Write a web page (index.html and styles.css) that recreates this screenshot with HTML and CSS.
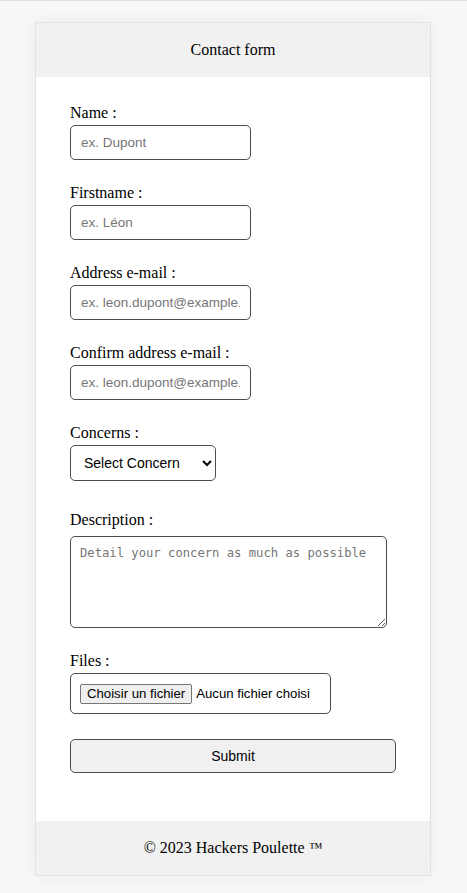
FILE: index.html
```html
<!DOCTYPE html>
<html lang="en">
<head>
<meta charset="utf-8">
<title>Contact form</title>
<link rel="stylesheet" href="styles.css">
</head>
<body>
<div class="card">
  <header class="card-head">Contact form</header>
  <form class="form">
    <div class="field">
      <label for="name">Name :</label>
      <input class="text" id="name" type="text" placeholder="ex. Dupont">
    </div>
    <div class="field">
      <label for="first">Firstname :</label>
      <input class="text" id="first" type="text" placeholder="ex. Léon">
    </div>
    <div class="field">
      <label for="mail">Address e-mail :</label>
      <input class="text" id="mail" type="email" placeholder="ex. leon.dupont@example.com">
    </div>
    <div class="field">
      <label for="mail2">Confirm address e-mail :</label>
      <input class="text" id="mail2" type="email" placeholder="ex. leon.dupont@example.com">
    </div>
    <div class="field">
      <label for="concern">Concerns :</label>
      <select class="select" id="concern">
        <option>Select Concern</option>
      </select>
    </div>
    <div class="field field-desc">
      <label for="desc">Description :</label>
      <textarea class="area" id="desc" placeholder="Detail your concern as much as possible"></textarea>
    </div>
    <div class="field field-files">
      <label for="files">Files :</label>
      <div class="filebox">
        <span class="filebtn">Choisir un fichier</span>
        <span class="filetxt">Aucun fichier choisi</span>
      </div>
    </div>
    <button class="submit" type="button">Submit</button>
  </form>
  <footer class="card-foot">© 2023 Hackers Poulette <span class="tm">™</span></footer>
</div>
</body>
</html>
```
FILE: styles.css
```css
html, body {
  margin: 0;
  padding: 0;
}
body {
  background: #f8f8f8;
  border-top: 1px solid #dcdcdc;
  font-family: "Liberation Serif", "Times New Roman", serif;
  font-size: 16px;
  color: #000;
  padding-top: 21px;
  height: 893px;
  box-sizing: border-box;
}
.card {
  width: 396px;
  margin: 0 0 0 35px;
  background: #fff;
  border: 1px solid #e3e3e3;
  box-sizing: border-box;
  box-shadow: 0 0 18px rgba(0, 0, 0, 0.06);
}
.card-head, .card-foot {
  background: #f1f1f1;
  height: 54px;
  display: flex;
  align-items: center;
  justify-content: center;
}
.tm {
  font-size: 14px;
  margin-left: 4px;
}
.form {
  padding: 27px 34px 48px;
  display: flex;
  flex-direction: column;
}
.field {
  display: flex;
  flex-direction: column;
  align-items: flex-start;
  margin-bottom: 24px;
}
.field label {
  line-height: 18px;
  margin-bottom: 3px;
}
.text {
  width: 181px;
  height: 35px;
  box-sizing: border-box;
  border: 1px solid #4d4d4d;
  border-radius: 5px;
  padding: 0 10px;
  font-family: "Liberation Sans", Arial, sans-serif;
  font-size: 13.5px;
  color: #000;
  background: #fff;
}
.text::placeholder {
  color: #767676;
}
.select {
  width: 146px;
  height: 36px;
  box-sizing: border-box;
  border: 1px solid #4d4d4d;
  border-radius: 5px;
  padding: 0 8px 0 9px;
  font-family: "Liberation Sans", Arial, sans-serif;
  font-size: 14px;
  color: #000;
  background: #fff;
}
.field-desc {
  margin-top: 6px;
  margin-bottom: 24px;
}
.field-desc label {
  margin-bottom: 7px;
}
.area {
  width: 317px;
  height: 92px;
  box-sizing: border-box;
  border: 1px solid #4d4d4d;
  border-radius: 5px;
  padding: 9px 9px;
  font-family: "DejaVu Sans Mono", "Liberation Mono", monospace;
  font-size: 12.2px;
  color: #000;
  resize: both;
  margin: 0;
}
.area::placeholder {
  color: #767676;
}
.field-files {
  margin-bottom: 25px;
}
.field-files label {
  margin-bottom: 3px;
}
.filebox {
  width: 261px;
  height: 41px;
  box-sizing: border-box;
  border: 1px solid #4d4d4d;
  border-radius: 5px;
  padding: 0 9px;
  display: flex;
  align-items: center;
  white-space: nowrap;
  font-family: "Liberation Sans", Arial, sans-serif;
  font-size: 13.2px;
}
.filebtn {
  flex-shrink: 0;
  background: #efefef;
  border: 1px solid #767676;
  border-radius: 2px;
  padding: 1px 6px;
  line-height: 16px;
  margin-right: 4px;
  color: #000;
}
.filetxt {
  flex-shrink: 0;
  color: #000;
}
.submit {
  width: 326px;
  height: 34px;
  box-sizing: border-box;
  border: 1px solid #4d4d4d;
  border-radius: 5px;
  background: #f0f0f0;
  font-family: "Liberation Sans", Arial, sans-serif;
  font-size: 14px;
  color: #000;
  padding: 0;
}
```
